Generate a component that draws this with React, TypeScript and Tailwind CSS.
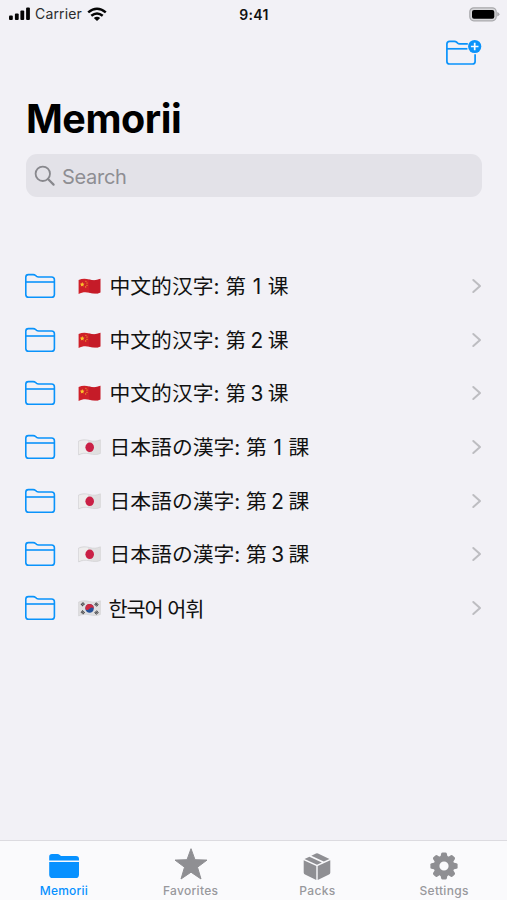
import React from "react";

const BLUE = "#0a93fb";

function FolderIcon() {
  return (
    <svg width="32" height="26" viewBox="0 0 32 26" fill="none" stroke={BLUE} strokeWidth="1.6" strokeLinejoin="round">
      <path d="M1.8 4.2Q1.8 1.6 4.4 1.6H9.2Q10.6 1.6 11.6 2.5L12.6 3.4Q13.4 4 14.6 4H27.6Q30.4 4 30.4 6.8V21.4Q30.4 24.2 27.6 24.2H4.6Q1.8 24.2 1.8 21.4Z" />
      <path d="M1.8 9H30.4" />
    </svg>
  );
}

function AddFolderIcon() {
  return (
    <svg width="38" height="28" viewBox="0 0 38 28" fill="none" stroke={BLUE} strokeWidth="1.7" strokeLinecap="butt">
      <path d="M22.8 4.9H14.6Q13.4 4.9 12.6 4.2L11.6 3.2Q10.8 2.4 9.4 2.4H4.6Q1.9 2.4 1.9 5V22.4Q1.9 25 4.6 25H27.4Q30.1 25 30.1 22.4V15.2" />
      <path d="M1.9 9.8H22.4" />
      <circle cx="29.7" cy="7.5" r="6.6" fill={BLUE} stroke="none" />
      <path d="M29.7 3.7v7.6M25.9 7.5h7.6" stroke="#f8fbff" strokeWidth="1.7" />
    </svg>
  );
}

const WAVE = "M.6 2.1C4 .4 7.4.4 11.4 1.5S19 2.3 22.4.8V14.4C19 16 15.4 15.8 11.4 14.8S4 14.3.6 15.9Z";

function Flag({ country }: { country: string }) {
  if (country === "cn") {
    return (
      <svg width="23" height="17" viewBox="0 0 23 17">
        <path d={WAVE} fill="#cf2029" />
        <path d="M11 1.4C15 2.6 19 2.3 22.4.8V14.4C19 16 15 15.8 11 14.7Z" fill="#b81628" opacity=".45" />
        <g fill="#fbc52b">
          <path d="M4.2 4.1l.7 1.5 1.6.2-1.2 1.1.3 1.6-1.4-.8-1.4.8.3-1.6-1.2-1.1 1.6-.2z" />
          <circle cx="7.9" cy="3.2" r=".55" />
          <circle cx="9" cy="5" r=".55" />
          <circle cx="9" cy="7.2" r=".55" />
          <circle cx="7.7" cy="8.9" r=".55" />
        </g>
      </svg>
    );
  }
  if (country === "jp") {
    return (
      <svg width="23" height="17" viewBox="0 0 23 17">
        <path d={WAVE} fill="#e0dfe0" stroke="#cfced0" strokeWidth=".6" />
        <path d="M1 2.6C4 1.2 7 1.2 10 1.8V14C7 13.5 4 13.5 1 15Z" fill="#eeeded" />
        <ellipse cx="11.7" cy="8.3" rx="4.3" ry="4.8" fill="#ca2045" />
      </svg>
    );
  }
  return (
    <svg width="23" height="17" viewBox="0 0 23 17">
      <path d={WAVE} fill="#e0dfe0" stroke="#cfced0" strokeWidth=".6" />
      <ellipse cx="11.6" cy="8.4" rx="4.2" ry="4.3" fill="#26539a" />
      <path d="M7.5 9.3C6.8 6 9 4 11.7 4.1C14.8 4.3 16.2 6.6 15.7 9C14.8 7 13 7.1 11.8 8.5S8.8 10.8 7.5 9.3Z" fill="#cf2940" />
      <g stroke="#3c3c3f" strokeWidth="3.1" strokeDasharray=".9 .35">
        <path d="M3.6 5.3L6 3.1M17.3 13.6L19.8 11.5M17.2 3.5L19.7 5.6M3.6 11.3L6.1 13.4" />
      </g>
    </svg>
  );
}

function Chevron() {
  return (
    <svg width="12" height="18" viewBox="0 0 12 18" fill="none" stroke="#bdbdc1" strokeWidth="2" strokeLinecap="round" strokeLinejoin="round">
      <path d="M2.3 3L9 9L2.3 15" />
    </svg>
  );
}

const rows = [
  { country: "cn", title: "中文的汉字", num: "1", unit: "课" },
  { country: "cn", title: "中文的汉字", num: "2", unit: "课" },
  { country: "cn", title: "中文的汉字", num: "3", unit: "课" },
  { country: "jp", title: "日本語の漢字", num: "1", unit: "課" },
  { country: "jp", title: "日本語の漢字", num: "2", unit: "課" },
  { country: "jp", title: "日本語の漢字", num: "3", unit: "課" },
];

function RowShell({ country, children }: { country: string; children: React.ReactNode }) {
  return (
    <li className="flex h-[53.7px] items-center pl-6 pr-[24px]">
      <FolderIcon />
      <span className="ml-[22px] w-[31.5px] shrink-0 pt-px">
        <Flag country={country} />
      </span>
      <span className="flex-1 whitespace-nowrap pt-[2px] text-[20.8px] leading-[30px] text-[#111]">{children}</span>
      <Chevron />
    </li>
  );
}

function StatusBar() {
  return (
    <header className="grid h-7 grid-cols-3 items-center pl-2 pr-[7px]">
      <div className="flex items-center">
        <svg width="23" height="14" viewBox="0 0 23 14" fill="#050505">
          <rect x="1" y="8.6" width="3.8" height="4.4" rx="1" />
          <rect x="6.9" y="6.5" width="3.8" height="6.5" rx="1" />
          <rect x="12.4" y="3.6" width="3.8" height="9.4" rx="1" />
          <rect x="18.1" y=".4" width="3.8" height="12.6" rx="1" />
        </svg>
        <span className="ml-[4px] w-[52px] text-[14px] leading-none tracking-[0.15px] text-[#2c2c2e]">Carrier</span>
        <svg width="20" height="15" viewBox="0 0 20 15" fill="none" stroke="#050505" strokeWidth="2.5">
          <path d="M1.2 5.4Q10 -2 18.8 5.4M4.3 8.8Q10 4.1 15.7 8.8" />
          <path d="M6.8 11Q10 8.4 13.2 11L10 14.1Z" fill="#050505" stroke="none" />
        </svg>
      </div>
      <span className="pt-px text-center text-[14px] font-semibold leading-none tracking-[0.3px] text-[#111]">9:41</span>
      <svg className="justify-self-end" width="31" height="15" viewBox="0 0 31 15">
        <rect x=".8" y=".8" width="26.4" height="13" rx="4" fill="#d7d7da" stroke="#a9a9ac" strokeWidth="1.2" />
        <rect x="3" y="2.9" width="22.3" height="8.9" rx="2" fill="#000" />
        <path d="M28.2 5Q30.5 5.8 30.5 7.3T28.2 9.6Z" fill="#aaaaad" />
      </svg>
    </header>
  );
}

function TabIcon({ name }: { name: string }) {
  if (name === "Memorii") {
    return (
      <svg width="32" height="26" viewBox="0 0 32 26" fill="#0791ff">
        <path d="M1.2 7.6V3.8Q1.2 1 4 1H9.3Q10.8 1 11.8 2L12.3 2.4Q13 3 14.2 3H28Q31 3 31 6V7.6Z" />
        <path d="M1.2 9H31V21.4Q31 25 27.6 25H4.8Q1.2 25 1.2 21.4Z" />
      </svg>
    );
  }
  if (name === "Favorites") {
    return (
      <svg className="-mt-[4px]" width="36" height="34" viewBox="0 0 36 34" fill="#8f8f93">
        <path d="M18 1.7L22 12.7L34 13.1L24.5 20.2L28 32L18 25.2L8 32L11.5 20.2L2 13.1L14 12.7Z" stroke="#8f8f93" strokeWidth="1" strokeLinejoin="round" />
      </svg>
    );
  }
  if (name === "Packs") {
    return (
      <svg width="28" height="30" viewBox="0 0 28 30" fill="#8f8f93">
        <path d="M.7 9.2L13.3 14.9V28.9L2 23.4Q.7 22.8 .7 21.4Z" />
        <path d="M27.3 9.2L14.7 14.9V28.9L26 23.4Q27.3 22.8 27.3 21.4Z" />
        <path d="M1.5 8L6.4 5.7L18.9 11.5L14 13.7Z" />
        <path d="M8.3 4.8L13 2.6Q14 2.1 15 2.6L26.5 8L20.8 10.6Z" />
      </svg>
    );
  }
  return (
    <svg width="28" height="28" viewBox="-14 -14 28 28" fill="#8f8f93">
      {[0, 45, 90, 135, 180, 225, 270, 315].map((a) => (
        <path key={a} transform={`rotate(${a})`} d="M-3.8 -8L-2.8 -12.5Q-2.5 -13.6 -1.4 -13.6H1.4Q2.5 -13.6 2.8 -12.5L3.8 -8Z" />
      ))}
      <circle r="7.5" fill="none" stroke="#8f8f93" strokeWidth="5.8" />
    </svg>
  );
}

const tabs = ["Memorii", "Favorites", "Packs", "Settings"];

export default function App() {
  return (
    <div className="flex h-[900px] w-[507px] flex-col overflow-hidden bg-[#f2f1f6] font-[Inter,'Noto_Sans_CJK_SC',sans-serif]">
      <StatusBar />
      <div className="flex h-[52px] items-start justify-end pr-[24px] pt-[11px]">
        <AddFolderIcon />
      </div>
      <h1 className="ml-[26px] mt-[14px] h-[50px] text-[39.5px] font-bold leading-[51px] tracking-[-0.45px] text-black">Memorii</h1>
      <div className="ml-[26px] mr-[25px] mt-[10px] flex h-[43px] items-center rounded-[11px] bg-[#e3e2e8] pl-[8px] text-[#8e8e93]">
        <svg width="22" height="22" viewBox="0 0 22 22" fill="none" stroke="#88888d" strokeWidth="1.8" strokeLinecap="round">
          <circle cx="8.8" cy="8.8" r="7.2" />
          <path d="M14 14L19.6 19.6" strokeWidth="2.2" />
        </svg>
        <span className="ml-[6px] pt-[2px] text-[20px] leading-none tracking-[-0.3px]">Search</span>
      </div>
      <ul className="mt-[62px] flex-1">
        {rows.map((r) => (
          <RowShell key={r.country + r.num} country={r.country}>
            <span lang={r.country === "cn" ? "zh-CN" : "ja"} className={r.country === "cn" ? "font-[Inter,'Noto_Sans_CJK_SC',sans-serif]" : "font-[Inter,'Noto_Sans_CJK_JP',sans-serif]"}>
              {r.title}: 第<span className="inline-block w-[21.5px] text-center">{r.num}</span>{r.unit}
            </span>
          </RowShell>
        ))}
        <RowShell country="kr">
          <span lang="ko" className="-ml-px font-['Noto_Sans_CJK_KR',sans-serif] tracking-[-1.1px]">한국어 어휘</span>
        </RowShell>
      </ul>
      <nav className="grid h-[60px] grid-cols-4 border-t border-[#dcdbe0] bg-[#fafafc]">
        {tabs.map((t) => (
          <div key={t} className="flex flex-col items-center pl-px">
            <span className="flex h-[42px] items-center pt-[7px]">
              <TabIcon name={t} />
            </span>
            <span className={t === "Memorii" ? "text-[12px] font-medium leading-[15px] tracking-[0.2px] text-[#0791ff]" : "text-[12px] font-medium leading-[15px] tracking-[0.3px] text-[#98989c]"}>{t}</span>
          </div>
        ))}
      </nav>
    </div>
  );
}
